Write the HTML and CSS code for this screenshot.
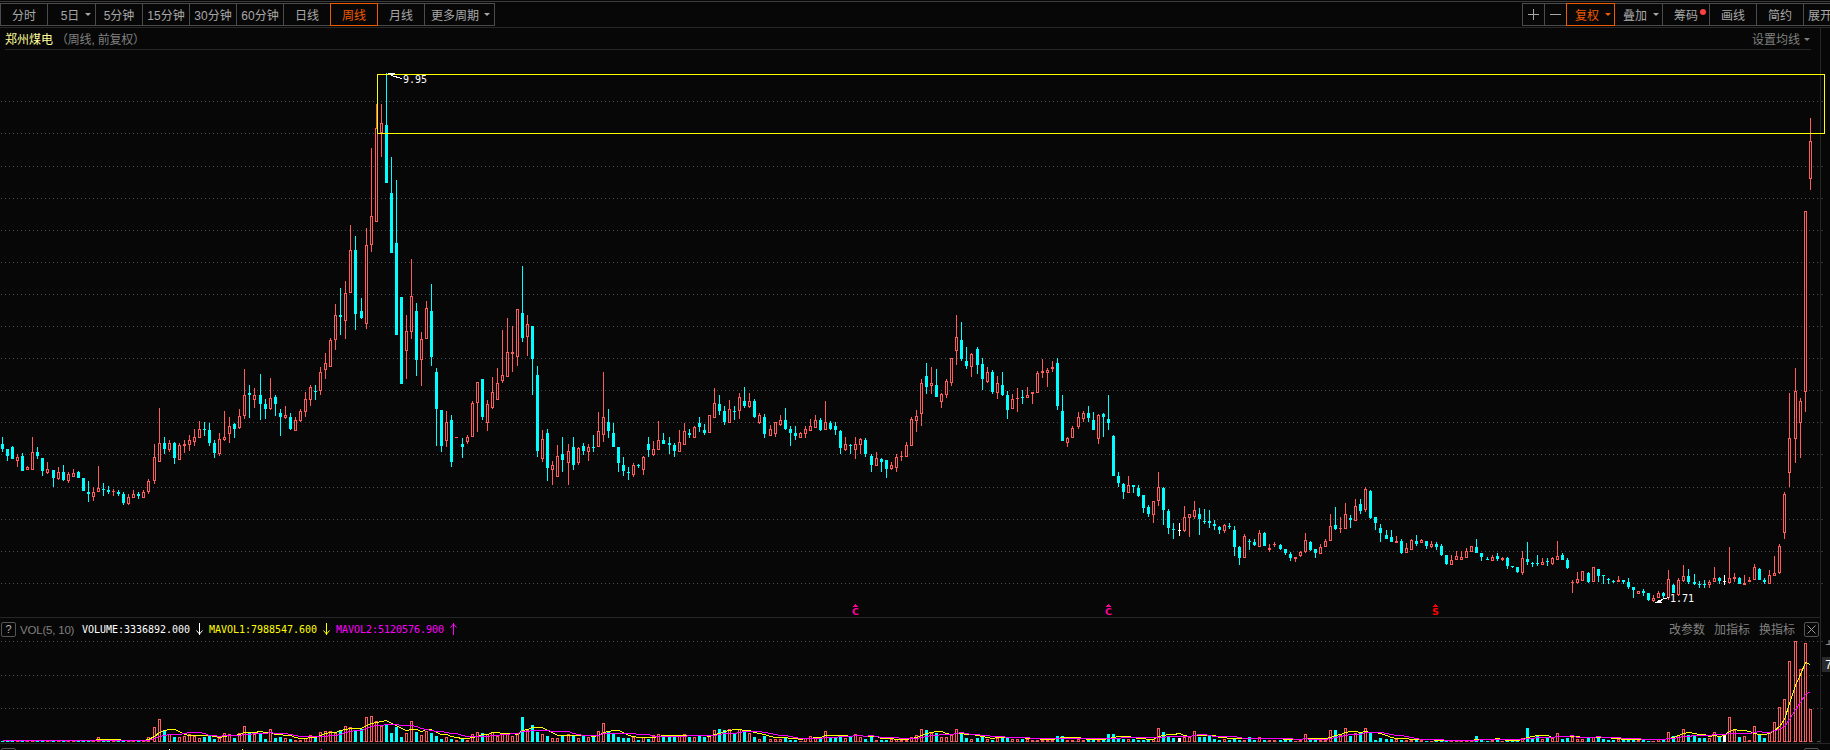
FILE: index.html
```html
<!DOCTYPE html>
<html lang="zh-CN">
<head>
<meta charset="utf-8">
<title>郑州煤电 周线</title>
<link rel="stylesheet" href="styles.css">
</head>
<body>
<nav class="toolbar">
  <div class="group">
    <button class="btn">分时</button>
    <button class="btn wide caret-btn day5">5日<i class="caret"></i></button>
    <button class="btn">5分钟</button>
    <button class="btn">15分钟</button>
    <button class="btn">30分钟</button>
    <button class="btn">60分钟</button>
    <button class="btn">日线</button>
    <button class="btn active">周线</button>
    <button class="btn">月线</button>
    <button class="btn caret-btn more">更多周期<i class="caret"></i></button>
  </div>
  <div class="group tools">
    <button class="btn sq"><svg width="11" height="11" class="ico"><path d="M0 5.5H11M5.5 0V11"/></svg></button>
    <button class="btn sq"><svg width="11" height="11" class="ico"><path d="M0 5.5H11"/></svg></button>
    <button class="btn wide caret-btn active">复权<i class="caret"></i></button>
    <button class="btn wide caret-btn">叠加<i class="caret"></i></button>
    <button class="btn dotted">筹码<i class="dot"></i></button>
    <button class="btn">画线</button>
    <button class="btn">简约</button>
    <button class="btn last">展开</button>
  </div>
</nav>
<header class="title-wrap">
  <div class="title">
    <span class="name">郑州煤电</span>
    <span class="mode">（周线, 前复权）</span>
    <span class="ma">设置均线<i class="caret"></i></span>
  </div>
</header>
<svg id="price" class="chart price" width="1830" height="567" viewBox="0 50 1830 567"></svg>
<section class="vol-head">
  <span class="box">?</span>
  <span class="vname">VOL(5, 10)</span>
  <span class="num white">VOLUME:3336892.000</span>
  <svg class="arrow white" width="7" height="12"><path d="M3.5 0V12M.5 7.5L3.5 11L6.5 7.5"/></svg>
  <span class="num yellow">MAVOL1:7988547.600</span>
  <svg class="arrow yellow" width="7" height="12"><path d="M3.5 0V12M.5 7.5L3.5 11L6.5 7.5"/></svg>
  <span class="num magenta">MAVOL2:5120576.900</span>
  <svg class="arrow magenta" width="7" height="12"><path d="M3.5 0V12M.5 4.5L3.5 1L6.5 4.5"/></svg>
  <span class="links"><span>改参数</span><span>加指标</span><span>换指标</span></span>
  <span class="box close"><svg width="9" height="9"><path d="M.5 .5L8.5 8.5M8.5 .5L.5 8.5"/></svg></span>
</section>
<svg id="volume" class="chart" width="1830" height="103" viewBox="0 640 1830 103"></svg>
<footer class="next-pane"><span class="box">?</span><span class="tick white"></span><span class="tick yellow"></span><span class="tick magenta"></span><span class="box close"></span></footer>
<script src="chart.js"></script>
</body>
</html>
```
FILE: styles.css
```css
* { box-sizing: border-box; }
body {
  margin: 0; width: 1830px; height: 750px; overflow: hidden;
  background: #070707; color: #a8a8a8;
  font: 12px/14px "Liberation Sans", "Noto Sans CJK SC", sans-serif;
  display: flex; flex-direction: column;
}
.toolbar {
  flex: none; height: 28px; padding-top: 1px; display: flex; justify-content: space-between;
  border-bottom: 1px solid #262626; overflow: hidden;
  background: linear-gradient(#3c3c3c, #3c3c3c) 0 1px / 100% 1px no-repeat;
}
.group { display: flex; padding-top: 2px; }
.tools { width: 308px; flex: none; }
.btn {
  flex: none; width: 48px; height: 23px; margin: 0 -1px 0 0; padding: 2px 0 0;
  border: 1px solid #4b4b4b; background: none; color: #a8a8a8;
  font: inherit; white-space: nowrap; display: flex; align-items: center; justify-content: center;
}
.wide { width: 49px; }
.btn.active { border-color: #f05a00; color: #f05a00; z-index: 1; position: relative; }
.sq { width: 23px; padding-top: 0; }
.caret-btn { gap: 6px; padding-left: 5px; }
.more { width: 71px; padding-left: 2px; gap: 5px; }
.day5 { padding-left: 9px; }
.last { width: 60px; justify-content: flex-start; padding-left: 4px; }
.dotted { gap: 2px; padding-left: 8px; align-items: center; }
.dot { width: 6px; height: 6px; border-radius: 50%; background: #ff4040; margin-bottom: 7px; }
.caret { border: 3px solid transparent; border-top-color: currentColor; border-bottom: 0; width: 0; height: 0; }
.btn .caret { margin-bottom: 2px; }
.ico path { stroke: currentColor; fill: none; shape-rendering: crispEdges; }
.title-wrap { flex: none; width: 1821px; height: 22px; border-right: 1px solid #262626; }
.title {
  height: 22px; margin: 0 9px 0 5px; border-bottom: 1px solid #262626;
  display: flex; align-items: center; padding-top: 2px;
}
.name { color: #ffff9b; width: 51px; }
.mode { color: #808080; letter-spacing: -.2px; }
.ma { color: #808080; margin-left: auto; padding-right: 1px; display: flex; align-items: center; gap: 4px; }
.chart { flex: none; display: block; shape-rendering: crispEdges; }
.vol-head {
  flex: none; width: 1821px; height: 23px; display: flex; align-items: center;
  border-top: 1px solid #262626; border-right: 1px solid #262626;
  padding: 0 1px; color: #808080;
}
.box {
  flex: none; width: 15px; height: 15px; border: 1px solid #555; border-radius: 2px;
  display: flex; align-items: center; justify-content: center; font-size: 11px; line-height: 13px; color: #b0b0b0;
}
.vname { width: 62px; margin-left: 4px; padding-top: 1px; white-space: nowrap; font-size: 11.5px; letter-spacing: -.2px; }
.num { font: 10px/12px "DejaVu Sans Mono", monospace; letter-spacing: -.02px; width: 114px; padding-top: 2px; }
.white { color: #fff; }
.yellow { color: #ff0; }
.magenta { color: #f0f; }
.arrow { margin-right: 6px; flex: none; }
.arrow path { stroke: currentColor; fill: none; }
.links { margin-left: auto; display: flex; gap: 9px; margin-right: 9px; padding-top: 2px; }
.close path { stroke: #999; fill: none; }
.next-pane { flex: none; height: 7px; border-top: 1px solid #262626; padding: 4px 11px 0 1px; display: flex; overflow: hidden; }
.next-pane .close { margin-left: auto; }
.tick { width: 1px; height: 1px; margin-top: 1px; background: currentColor; }
.tick.white { margin-left: 153px; }
.tick.yellow { margin-left: 72px; }
.tick.magenta { margin-left: 78px; }
.label { font: 10px "DejaVu Sans Mono", monospace; fill: #fff; }
.mark { font: bold 9.5px "DejaVu Sans", sans-serif; text-anchor: middle; }
.axis { font: 12px "Liberation Mono", monospace; fill: #909090; }
```
FILE: chart.js
```javascript
// Candles: direction (u, d, w), high, body top, body bottom, low, in thirds of a pixel below y0.
const SEGMENTS = [
  { y0: 340, rows: `d 291 312 328 335,d 327 327 348 362,d 318 321 357 357,u 342 351 363 381,d 339 348 393 393,u 378 381 390 390,u 291 336 390 390,d 321 336 348 357,d 354 354 393 408,u 366 387 399 402,d 390 390 414 441,u 381 396 417 420,d 375 396 420 423,u 396 402 423 429,u 387 399 411 411,d 393 396 414 414,d 414 414 453 453,d 423 456 462 486,u 441 456 471 483,u 378 444 456 456,d 429 447 450 468,d 438 450 456 462,u 447 453 456 468,d 450 456 462 468,d 456 462 489 495,u 462 471 492 495,u 450 462 474 474,d 456 462 468 477,u 450 456 474 474,u 417 423 456 462,u 312 351 423 432,u 204 309 366 366,d 291 309 327 342,u 300 309 330 336,d 306 309 354 372,u 309 315 360 360,u 300 312 318 339,u 285 300 315 333,u 267 291 306 318,u 243 267 294 294,d 246 267 270 288,d 249 270 309 318,d 300 309 339 354,u 279 297 342 348,u 213 291 300 303,u 231 258 282 309,d 249 252 267 294,u 207 228 264 267,u 87 165 228 237,d 135 159 165 234,u 144 165 180 204,d 102 165 192 240,d 177 192 207 237,u 114 174 207 210,d 165 171 192 228,d 207 219 231 288,u 198 225 234 237,d 219 231 267 270,u 231 240 273 273,u 207 213 243 246,u 156 177 216 231` },
  { y0: 60, rows: `u 975 981 1020 1038,d 975 993 996 1020,u 921 936 993 1005,u 879 909 930 957,u 834 840 921 921,u 732 765 840 870,d 684 765 771 825,u 663 699 783 837,u 495 570 699 699,d 528 570 762 810,d 714 753 774 777,u 504 555 792 807,u 264 468 555 576,u 132 204 486 486,u 132 189 220 291,d 39 195 369 369,d 291 399 579 579,d 360 549 825 825,d 711 711 972 972,u 765 813 873 957,u 597 708 816 837,d 729 753 900 948,u 816 837 900 978,u 723 744 837 837,d 672 753 891 918,d 924 936 1047 1158,d 1050 1050 1158 1176,u 1053 1086 1143 1161,d 1065 1080 1206 1221,u 1131 1131 1134 1134,d 1134 1152 1161 1194,u 1125 1131 1146 1152,u 1023 1029 1131 1131,u 966 966 1029 1116,d 957 957 1071 1080,u 1020 1032 1089 1113,u 951 996 1044 1047,u 924 969 1020 1020,u 810 945 963 969,u 774 876 951 951,u 798 876 882 936,u 747 747 891 918,d 618 759 834 846,u 765 792 831 888,d 798 798 897 1005,d 918 945 1173 1191,u 1110 1137 1197 1206,d 1107 1119 1224 1263,u 1203 1215 1230 1275,u 1155 1188 1251 1251,d 1131 1182 1200 1236,u 1152 1173 1209 1275,d 1131 1161 1215 1230,u 1161 1164 1209 1215,d 1149 1158 1173 1185,u 1152 1161 1176 1203,d 1125 1161 1164 1176,u 1056 1113 1161 1161,u 936 1071 1125 1146` },
  { y0: 370, rows: `d 117 156 183 204,d 159 189 231 231,d 231 231 279 306,d 261 285 303 318,d 291 306 309 330,u 279 285 315 321,d 282 285 288 294,u 258 261 300 315,d 201 222 240 261,u 213 237 255 258,u 153 210 240 240,d 189 210 222 222,d 201 219 225 252,d 219 225 243 261,u 180 216 246 246,u 159 183 225 225,d 177 189 195 204,u 168 171 204 204,d 141 159 171 186,d 162 180 189 195,u 135 135 189 189,u 54 99 144 144,d 75 102 123 135,d 108 123 156 165,u 90 117 159 159,d 108 123 126 150,u 69 81 123 147,d 51 93 108 114,u 69 93 111 114,d 87 93 141 144,u 129 135 159 162,d 132 141 192 204,u 165 177 198 198,u 156 156 192 201,u 135 150 165 168,d 114 150 177 180,d 168 177 189 228,d 168 189 198 210,u 186 189 204 204,u 168 177 192 204,u 147 168 183 183,u 135 150 174 174,d 144 150 180 183,u 93 156 180 180,d 153 159 177 180,d 156 168 180 195,d 180 183 234 252,u 201 222 240 243,d 222 225 228 252,u 201 222 240 267,u 204 207 225 252,d 204 210 252 261,d 252 258 285 306,u 246 264 288 288,d 264 267 276 306,d 270 270 297 324,u 276 285 297 300,u 252 261 294 306,u 243 258 261 273,u 216 225 261 261,u 141 147 228 228,u 120 138 153 186` },
  { y0: 300, rows: `u 237 249 342 378,d 189 228 261 282,u 201 249 258 282,d 207 255 291 291,u 279 282 306 324,u 237 243 285 294,u 174 174 249 258,u 45 111 153 195,d 66 120 177 183,d 141 183 198 207,u 159 162 201 231,d 141 147 195 222,d 174 192 237 270,u 201 216 246 249,d 210 216 276 282,u 228 249 279 297,d 216 255 285 288,d 273 285 330 357,u 282 297 327 327,u 264 294 297 336,d 270 291 294 312,u 261 285 294 294,u 276 276 282 312,u 213 219 279 279,u 177 213 219 234,u 204 210 219 261,u 183 201 207 216,d 174 189 318 330,d 285 333 423 423,u 411 414 429 441,u 378 384 414 414,u 336 351 381 387,u 333 339 357 366,d 318 339 354 366,d 336 360 390 390,u 342 345 417 432,d 339 342 351 411,d 285 357 369 390,d 405 408 528 528,d 516 528 549 561,d 549 552 576 597,u 528 555 579 579,d 555 555 561 579,d 555 564 588 591,d 585 585 624 639,d 615 621 642 651,u 603 603 645 669,u 516 561 603 618,d 561 564 630 675,d 627 633 684 702,d 669 687 690 717,w 669 690 693 708,u 618 651 693 696,u 642 642 654 711,u 603 630 651 657,d 624 642 657 705,d 627 663 666 672,d 630 663 669 684` },
  { y0: 460, rows: `d 180 192 198 210,d 198 201 210 222,u 192 195 213 219,d 189 198 201 207,d 198 210 261 288,d 258 261 294 315,u 222 228 294 294,d 237 243 246 270,d 237 246 255 258,u 210 219 261 261,d 216 219 258 258,u 252 264 270 276,u 246 252 255 261,d 252 255 267 270,d 267 267 279 285,d 276 282 294 303,u 291 291 297 306,u 273 276 288 291,u 219 240 276 279,d 243 246 270 273,d 267 267 279 294,u 252 261 282 282,u 237 243 261 261,u 162 198 243 243,d 141 195 207 210,u 171 204 207 219,u 129 162 207 207,d 165 174 180 204,u 117 138 183 183,d 117 132 153 162,u 81 87 150 156,d 90 93 174 177,d 171 171 189 210,d 192 204 219 246,d 210 225 237 237,d 210 231 246 246,u 228 243 249 249,d 237 243 279 282,u 249 264 279 279,u 237 240 270 270,d 225 243 252 258,u 237 240 249 249,d 243 243 258 267,u 243 252 261 264,d 246 252 261 270,d 252 258 285 288,d 285 285 312 315,u 285 300 315 315,u 273 288 300 300,u 273 291 300 300,u 264 273 294 294,u 258 258 276 276,d 237 261 279 279,d 279 279 291 303,d 291 297 300 300,u 285 291 303 303,d 279 288 297 303,u 291 294 300 303,d 291 294 318 327,d 318 318 321 324,d 321 321 336 339` },
  { y0: 500, rows: `u 153 174 219 225,d 126 177 186 195,d 186 189 192 201,d 165 189 192 198,u 174 186 195 195,d 174 183 186 198,u 171 174 192 195,u 123 168 180 180,d 159 165 180 180,d 174 180 204 207,u 240 246 249 279,u 216 237 249 252,u 213 213 243 243,d 216 219 246 249,u 201 201 246 246,d 207 207 228 246,d 225 225 228 252,d 234 237 240 252,d 240 243 246 249,u 228 240 246 246,d 240 240 246 252,d 234 246 261 267,d 261 261 270 294,u 273 273 282 282,d 267 273 279 288,d 279 279 300 303,u 285 294 303 306,u 273 279 294 294,d 276 279 288 297,u 210 237 294 300,d 252 255 279 279,u 234 240 285 288,u 195 228 243 246,d 207 228 246 252,d 222 246 252 255,d 243 252 255 264,d 240 252 255 264,u 240 246 255 264,u 201 234 246 246,d 231 234 243 252,w 225 243 246 255,u 141 234 249 252,u 219 231 237 246,d 231 234 252 252,u 225 249 255 255,u 231 240 246 246,u 192 201 240 240,d 204 207 240 240,d 234 240 246 252,u 210 225 252 252,u 168 219 228 228,u 132 138 219 222,u -24 -18 99 117,u -321 -186 -81 -39,u -396 -327 -183 -111,u -306 -297 -231 -126,u -867 -867 -324 -264,u -1146 -1077 -963 -930` }
];
// Volume bar heights, keyed by the x of the first bar of each run.
const VOLUMES = {
  2: '1 2 1 1 1 1 1 1 1 1 1 1 1 1 1 1 1 1 1 5 1 1 1 1 1 1 1 1 1 5',
  154: '15 23 11 8 5 5 6 8 6 4 5 6 3 4 9 8 4 9 16 10 8 9 3 13 4 5 4 3 2 2 4 7 6 10 11 11 9 12 16 15 11 13 25 26 21 16 18 9 15 5 9 21 10 7 11 9 6 3 5 3 2 4 2 8 10 9 8 10 6 8 9 6 8',
  522: '25 12 17 10 8 6 4 4 7 8 6 4 6 5 6 11 19 11 8 5 4 4 5 2 5 3 7 8 5 5 5 7 8 5 5 6 5 6 12 13 12 13 8 13 10 9 5 3 6',
  770: '3 3 3 4 2 2 1 4 6 5 3 11 5 5 5 4 6 8 5 3 5 2 2 2 3 3 2 2 5 7 13 12 9 9 5 5 7 13 8 4 3',
  977: '4 5 3 2 4 5 5 3 3 3 3 2 2 2 2 2 6 6 2 2 3 2 3 2 2 2 8 8 3 3 3 3 2 2 2 3 14 10 6 4',
  1179: '4 5 5 11 5 5 6 3 2 3 2 4 2 2 5 2 5 2 2 2 2 2 2 1 2 8 2 2 2 2 12 12 7 14 6 9 9 14 9 2 4',
  1386: '3 3 3 2 2 2 2 2 1 1 1 1 1 1 1 1 1 1 6 2 1 2 2 1 1 1 1 4 14 4 6 3',
  1547: '4 4 9 3 4 5 3 3 5 5 5 3 2 2 3 2 2 2 2 2 1 1 3 2',
  1668: '10 6 7 13 7 6 4 4 4 10 5 7 25 12 5 6 2 16 8 4 9 20 35 43 81 101 73 99 33'
};
const COLORS = { u: '#ff5b5b', d: '#00ffff', w: '#ffffff' };
const WIDE_STEPS = new Set([47, 148, 254, 355, 456, 562, 663, 764, 865, 971, 1072, 1173, 1274, 1380, 1481, 1582, 1688, 1789]);

const rect = (x, y, w, h, c) => `<rect x="${x}" y="${y}" width="${w}" height="${h}" fill="${c}"/>`;
const body = (x, top, bottom, kind) => {
  const h = Math.max(1, bottom - top);
  if (kind !== 'u' || h < 3) return rect(x - 1, top, 3, h, COLORS[kind]);
  return rect(x - 1, top, 3, h, COLORS.u) + rect(x, top + 1, 1, h - 2, '#070707');
};
const grid = ys => ys.map(y =>
  `<path d="M1 ${y + 0.5}H1820" stroke="#4d4d4d" stroke-dasharray="1 3"/>` + rect(1821, y, 2, 1, '#333')).join('');

const candles = [];
let x = 2;
for (const seg of SEGMENTS) {
  for (const row of seg.rows.split(',')) {
    const [kind, ...v] = row.split(' ');
    candles.push({ x, kind, v: v.map(n => seg.y0 + Math.round(n / 3)) });
    x += WIDE_STEPS.has(x) ? 6 : 5;
  }
}

let out = grid([101, 133, 166, 198, 230, 262, 294, 326, 358, 390, 422, 454, 487, 519, 551, 583]);
out += rect(1820, 50, 1, 567, '#262626');
for (const c of candles) {
  const [high, top, bottom, low] = c.v;
  out += rect(c.x, high, 1, Math.max(1, low - high), COLORS[c.kind]) + body(c.x, top, bottom, c.kind);
}
out += '<rect x="377.5" y="74.5" width="1447" height="59" fill="none" stroke="#ff0"/>';
out += '<path d="M388 73.5H395M390 74.5H394M391 75.5L402 78.5" fill="none" stroke="#fff"/><text class="label" x="403" y="83">9.95</text>';
out += '<path d="M1655 602.5H1662M1657 601.5H1661M1658 600.5H1662M1661 599.5L1669 597.5" fill="none" stroke="#fff"/><text class="label" x="1670" y="602">1.71</text>';
for (const [mx, letter, color] of [[855, 'C', '#ff0099'], [1108, 'C', '#ff0099'], [1435, 'S', '#ff0000']]) {
  out += rect(mx, 604, 1, 1, color) + rect(mx - 1, 605, 3, 1, color) + rect(mx - 2, 606, 5, 1, color);
  out += `<text class="mark" x="${mx + 0.5}" y="615" fill="${color}">${letter}</text>`;
}
document.getElementById('price').innerHTML = out;

const base = 742;
const heights = new Array(candles.length).fill(2);
for (const [start, run] of Object.entries(VOLUMES)) {
  const first = candles.findIndex(c => c.x === Number(start));
  run.split(' ').forEach((h, i) => { if (first + i < heights.length) heights[first + i] = Number(h); });
}
const average = n => heights.map((_, i) => {
  const part = heights.slice(Math.max(0, i - n + 1), i + 1);
  return `${candles[i].x + 0.5},${Math.round(base - part.reduce((a, b) => a + b, 0) / part.length) - 0.5}`;
}).join(' ');
out = grid([641, 675, 708]) + rect(1820, 640, 1, 103, '#262626');
out += '<path d="M1 741.5H1820" stroke="#4d4d4d" stroke-dasharray="4 4"/>';
candles.forEach((c, i) => { out += body(c.x, base - heights[i], base, c.kind); });
out += `<polyline points="${average(5)}" fill="none" stroke="#ff0"/>`;
out += `<polyline points="${average(10)}" fill="none" stroke="#f0f"/>`;
out += '<text class="axis" x="1825" y="645">1</text>';
out += rect(1822, 657, 8, 15, '#2a2a2a') + '<text class="axis" x="1825" y="669" style="fill:#fff">7</text>';
document.getElementById('volume').innerHTML = out;
```
